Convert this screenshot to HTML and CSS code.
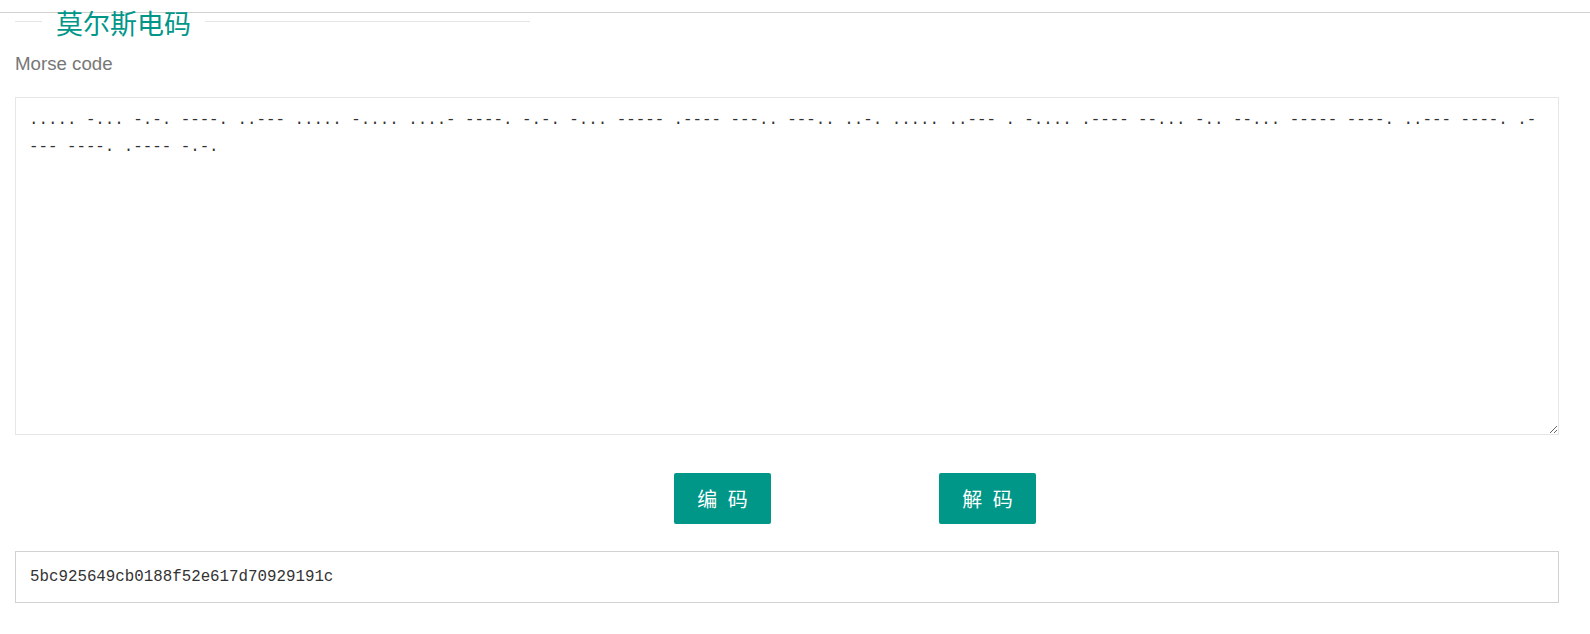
FILE: index.html
```html
<!DOCTYPE html>
<html lang="zh-cn">
<head>
    <meta charset="UTF-8">
    <title>莫尔斯电码</title>
    <meta name="viewport" content="width=device-width, initial-scale=1.0">
    <link rel="stylesheet" href="styles.css">
</head>
<body>

    <div class="topbar"></div>

    <div class="field-title">
        <span class="line line-left"></span>
        <h2>莫尔斯电码</h2>
        <span class="line line-right"></span>
    </div>

    <div class="main">
        <label for="morse" class="label">Morse code</label>
        <textarea id="morse" class="code-input">..... -... -.-. ----. ..--- ..... -.... ....- ----. -.-. -... ----- .---- ---.. ---.. ..-. ..... ..--- . -.... .---- --... -.. --... ----- ----. ..--- ----. .---- ----. .---- -.-.</textarea>

        <div class="btn-row">
            <button class="btn">编 码</button>
            <button class="btn">解 码</button>
        </div>

        <div class="result">5bc925649cb0188f52e617d70929191c</div>
    </div>

</body>
</html>
```

FILE: styles.css
```css
* {
    box-sizing: border-box;
}

body {
    margin: 0;
    background: #fff;
    font-family: 'Liberation Sans', Arial, sans-serif;
}

.topbar {
    height: 13px;
    border-bottom: 1px solid #d2d2d2;
}

.field-title {
    display: flex;
    align-items: center;
    width: 515px;
    height: 30px;
    margin: -7px 0 0 15px;
}

.line {
    height: 1px;
    background: #e6e6e6;
}

.line-left {
    width: 27px;
}

.line-right {
    flex: 1;
}

.field-title h2 {
    margin: 0;
    padding: 0 14px;
    font-family: 'Noto Sans CJK SC', sans-serif;
    font-size: 27px;
    font-weight: 400;
    line-height: 30px;
    color: #009688;
    position: relative;
    top: 2px;
}

.main {
    padding: 0 31px 0 15px;
}

.label {
    display: block;
    margin-top: 17px;
    font-size: 18.7px;
    line-height: 22px;
    color: #777;
}

.code-input {
    display: block;
    width: 100%;
    height: 338px;
    margin-top: 22px;
    padding: 9px 17px 9px 13px;
    border: 1px solid #e6e6e6;
    font-family: 'Liberation Mono', monospace;
    font-size: 15.8px;
    line-height: 27px;
    color: #333;
    word-break: break-all;
    outline: none;
}

.btn-row {
    display: flex;
    justify-content: center;
    gap: 168px;
    padding-left: 136px;
    margin-top: 38px;
}

.btn {
    width: 97px;
    height: 51px;
    border: none;
    border-radius: 2px;
    background-color: #009688;
    color: #fff;
    font-family: 'Noto Sans CJK SC', sans-serif;
    font-size: 20px;
    word-spacing: 6px;
    cursor: pointer;
}

.btn:hover {
    opacity: 0.8;
}

.result {
    margin-top: 27px;
    height: 52px;
    padding: 0 14px;
    border: 1px solid #d2d2d2;
    font-family: 'Liberation Mono', monospace;
    font-size: 15.8px;
    line-height: 50px;
    color: #333;
}
```
